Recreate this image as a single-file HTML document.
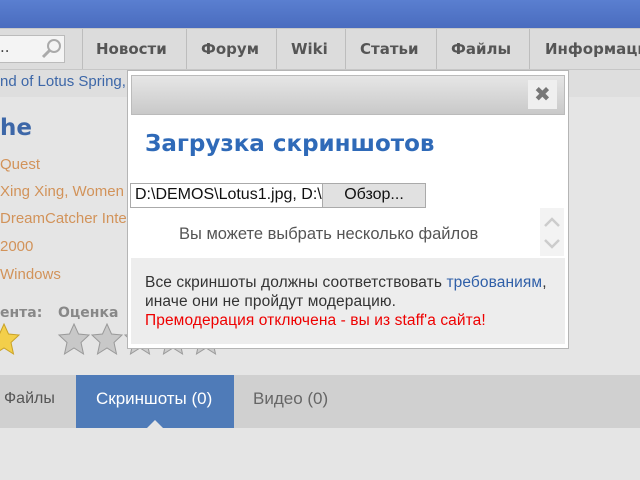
<!DOCTYPE html><html><head><meta charset="utf-8"><style>
*{margin:0;padding:0;box-sizing:border-box}
body{width:640px;height:480px;overflow:hidden;background:#e5e5e5;font-family:"DejaVu Sans","Liberation Sans",sans-serif;position:relative}
.a{position:absolute;white-space:nowrap}
.top{left:0;top:0;width:640px;height:28px;background:linear-gradient(#5a7fd0,#4a6cbf)}
.nav{left:0;top:28px;width:640px;height:42px;background:#dcdcdc;border-top:1px solid #c8c8c8;border-bottom:1px solid #c6c6c6}
.sep{top:29px;width:1px;height:40px;background:#bdbdbd}
.ni{top:40px;font-weight:bold;font-size:15px;color:#555}
.row{left:0;top:70px;width:640px;height:27px;background:#dedede}
.or{font-size:15px;color:#d2935a;left:0;font-family:"Liberation Sans",sans-serif}
.modal{left:127px;top:70px;width:442px;height:279px;background:#fff;border:1px solid #b5b5b5}
.hdr{left:131px;top:75px;width:434px;height:40px;background:linear-gradient(#e6e6e6,#c9c9c9);border:1px solid #bbb}
</style></head><body>
<div class="a top"></div>
<div class="a nav"></div>
<div class="a" style="left:-2px;top:35px;width:67px;height:28px;background:#f4f4f4;border:1px solid #bbb"></div>
<div class="a" style="left:0;top:38px;font-size:15px;color:#444">..</div>
<svg class="a" style="left:40px;top:37px" width="24" height="24"><circle cx="14" cy="9" r="6" fill="none" stroke="#aaa" stroke-width="2"/><line x1="10" y1="13" x2="3" y2="20" stroke="#aaa" stroke-width="3"/></svg>
<div class="a sep" style="left:82px"></div><div class="a sep" style="left:186px"></div><div class="a sep" style="left:276px"></div><div class="a sep" style="left:345px"></div><div class="a sep" style="left:436px"></div><div class="a sep" style="left:529px"></div>
<div class="a ni" style="left:96px">Новости</div>
<div class="a ni" style="left:201px">Форум</div>
<div class="a ni" style="left:291px">Wiki</div>
<div class="a ni" style="left:360px">Статьи</div>
<div class="a ni" style="left:451px">Файлы</div>
<div class="a ni" style="left:545px">Информация</div>
<div class="a row"></div>
<div class="a" style="left:0;top:73px;font-size:15px;color:#3d67a8;font-family:'Liberation Sans',sans-serif">nd of Lotus Spring,</div>
<div class="a" style="left:0;top:115px;font-size:23px;font-weight:bold;color:#3d67a8">he</div>
<div class="a or" style="top:156px">Quest</div>
<div class="a or" style="top:183px">Xing Xing, Women</div>
<div class="a or" style="top:210px">DreamCatcher Inte</div>
<div class="a or" style="top:238px">2000</div>
<div class="a or" style="top:266px">Windows</div>
<div class="a" style="left:0;top:305px;font-size:14px;font-weight:bold;color:#888">ента:</div>
<div class="a" style="left:58px;top:305px;font-size:14px;font-weight:bold;color:#888">Оценка</div>
<svg class="a" style="left:0;top:323px" width="230" height="36">
<defs><polygon id="s" points="16,1 20.5,11 31,12 23,19.5 25.5,31 16,25 6.5,31 9,19.5 1,12 11.5,11"/></defs>
<use href="#s" x="-12" fill="#f3cf4a" stroke="#c9a227"/>
<use href="#s" x="58" fill="#c8c8c8" stroke="#999"/>
<use href="#s" x="91" fill="#c8c8c8" stroke="#999"/>
<use href="#s" x="124" fill="#ccc" stroke="#999"/>
<use href="#s" x="157" fill="#ccc" stroke="#999"/>
<use href="#s" x="190" fill="#ccc" stroke="#999"/>
</svg>
<div class="a" style="left:0;top:375px;width:640px;height:53px;background:#d0d0d0"></div>
<div class="a" style="left:76px;top:375px;width:158px;height:53px;background:#4f7bb8"></div>
<div class="a" style="left:147px;top:420px;width:0;height:0;border-left:8px solid transparent;border-right:8px solid transparent;border-bottom:8px solid #e5e5e5"></div>
<div class="a" style="left:4px;top:390px;font-size:16px;color:#555;font-family:'Liberation Sans',sans-serif">Файлы</div>
<div class="a" style="left:96px;top:389px;font-size:17px;color:#fff;font-family:'Liberation Sans',sans-serif">Скриншоты (0)</div>
<div class="a" style="left:253px;top:389px;font-size:17px;color:#666;font-family:'Liberation Sans',sans-serif">Видео (0)</div>

<div class="a modal"></div>
<div class="a hdr"></div>
<div class="a" style="left:528px;top:80px;width:29px;height:29px;background:#efefef"></div>
<div class="a" style="left:534px;top:82px;font-size:20px;font-weight:bold;color:#777">✖</div>
<div class="a" style="left:145px;top:131px;font-size:23px;font-weight:bold;color:#2f6ab8">Загрузка скриншотов</div>
<div class="a" style="left:130px;top:183px;width:193px;height:25px;border:1px solid #aaa;background:#fff;overflow:hidden;font-size:16px;color:#111;padding:2px 0 0 4px;font-family:'Liberation Sans',sans-serif">D:\DEMOS\Lotus1.jpg, D:\</div>
<div class="a" style="left:322px;top:183px;width:104px;height:25px;border:1px solid #aaa;background:#e1e1e1;font-size:16px;color:#111;text-align:center;padding-top:2px;font-family:'Liberation Sans',sans-serif">Обзор...</div>
<div class="a" style="left:179px;top:225px;font-size:16.5px;color:#555;font-family:'Liberation Sans',sans-serif">Вы можете выбрать несколько файлов</div>
<div class="a" style="left:540px;top:208px;width:24px;height:48px;background:#f3f3f3"></div>
<svg class="a" style="left:540px;top:208px" width="24" height="48"><path d="M5 18 L12 11 L19 18 M5 32 L12 39 L19 32" fill="none" stroke="#ccc" stroke-width="2.5"/></svg>
<div class="a" style="left:131px;top:258px;width:434px;height:86px;background:#ededed"></div>
<div class="a" style="left:145px;top:273px;font-size:15.5px;line-height:19px;color:#333;font-family:'Liberation Sans',sans-serif;letter-spacing:0.1px">Все скриншоты должны соответствовать <span style="color:#2f5fa8">требованиям</span>,<br>иначе они не пройдут модерацию.<br><span style="color:#e00">Премодерация отключена - вы из staff'a сайта!</span></div>
</body></html>
